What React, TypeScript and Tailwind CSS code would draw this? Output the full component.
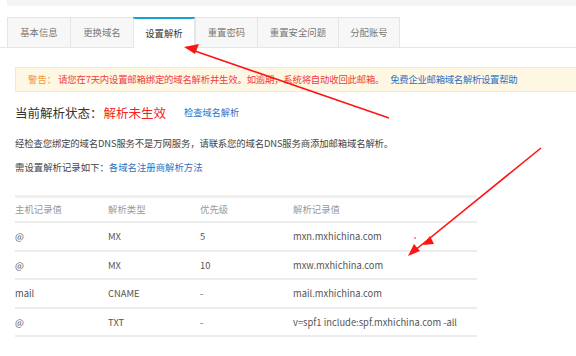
import React from "react";

const tabs = [
  { label: "基本信息", w: "w-[63px]" },
  { label: "更换域名", w: "w-[63px]" },
  { label: "设置解析", w: "w-[62px]", active: true },
  { label: "重置密码", w: "w-[62px]" },
  { label: "重置安全问题", w: "w-[81px]" },
  { label: "分配账号", w: "w-[62px]" },
];

const rows = [
  ["@", "MX", "5", "mxn.mxhichina.com"],
  ["@", "MX", "10", "mxw.mxhichina.com"],
  ["mail", "CNAME", "-", "mail.mxhichina.com"],
  ["@", "TXT", "-", "v=spf1 include:spf.mxhichina.com -all"],
];

const Arrows = () => (
  <svg
    className="pointer-events-none absolute inset-0"
    width="576"
    height="356"
    viewBox="0 0 576 356"
  >
    <g stroke="#ff1414" strokeWidth="1.6" fill="#ff1414">
      <line x1="389" y1="118" x2="192" y2="50" />
      <polygon points="184,47 199,44 195,54" stroke="none" />
      <line x1="541" y1="148" x2="414" y2="251" />
      <polygon points="408,256 414,244 420,251" stroke="none" />
      <polygon points="423,245 430,236 434,244" stroke="none" />
      <circle cx="415" cy="238" r="0.8" stroke="none" />
    </g>
  </svg>
);

export default function App() {
  return (
    <div
      className="relative h-[356px] w-[576px] overflow-hidden bg-white text-[9.4px] text-[#555]"
      style={{ fontFamily: '"Noto Sans CJK SC", "Noto Sans", sans-serif' }}
    >
      <div className="ml-[7px] h-[6px] bg-[#f3f4f6]" />

      <div className="mt-[11px] flex h-[31px] border-b border-[#e6e6e6] pl-[7px]">
        {tabs.map((t) => (
          <div
            key={t.label}
            className={
              t.active
                ? `${t.w} -mb-px flex items-center justify-center border-x border-t-2 border-x-[#e6e6e6] border-t-[#1aa3d2] bg-white text-[#333]`
                : `${t.w} flex items-center justify-center border-l border-t border-[#e6e6e6] bg-[#f7f7f7] text-[#777] last:border-r`
            }
          >
            {t.label}
          </div>
        ))}
      </div>

      <div className="ml-[15px] mt-[19px] flex h-[25px] items-center border border-r-0 border-[#f8e9c6] bg-[#fdf7e4] pl-[12px]">
        <span className="text-[#f39a3a]">警告：</span>
        <span className="ml-[2px] tracking-[-0.2px] text-[#f23c3c]">
          请您在7天内设置邮箱绑定的域名解析并生效。如逾期，系统将自动收回此邮箱。
        </span>
        <span className="ml-[6px] tracking-[-0.3px] text-[#2d6fc2]">免费企业邮箱域名解析设置帮助</span>
      </div>

      <div className="ml-[15px] mt-[11px] flex h-[20px] items-center">
        <span className="text-[12.5px] text-[#333]">当前解析状态：</span>
        <span className="ml-[1px] text-[12.5px] text-[#f52424]">解析未生效</span>
        <span className="ml-[18px] text-[9.2px] text-[#2d6fc2]">检查域名解析</span>
      </div>

      <div className="ml-[15px] mt-[13px] leading-[14px] tracking-[-0.15px] text-[#444]">
        经检查您绑定的域名DNS服务不是万网服务，请联系您的域名DNS服务商添加邮箱域名解析。
      </div>
      <div className="ml-[15px] mt-[10px] leading-[14px] text-[#444]">
        需设置解析记录如下：<span className="text-[#2d6fc2]">各域名注册商解析方法</span>
      </div>

      <div className="ml-[15px] mt-[21px] w-[462px] border-t-[3px] border-[#f0f0f0]">
        <div className="grid h-[25px] grid-cols-[93px_92px_93px_1fr] items-center border-b-2 border-[#ececec] text-[#999]">
          <span>主机记录值</span>
          <span>解析类型</span>
          <span>优先级</span>
          <span>解析记录值</span>
        </div>
        {rows.map((r, i) => (
          <div
            key={i}
            className="grid h-[28.5px] grid-cols-[93px_92px_93px_1fr] items-center border-b-2 border-[#ececec] text-[#555]"
          >
            {r.map((c, j) => (
              <span key={j}>{c}</span>
            ))}
          </div>
        ))}
      </div>

      <Arrows />
    </div>
  );
}
